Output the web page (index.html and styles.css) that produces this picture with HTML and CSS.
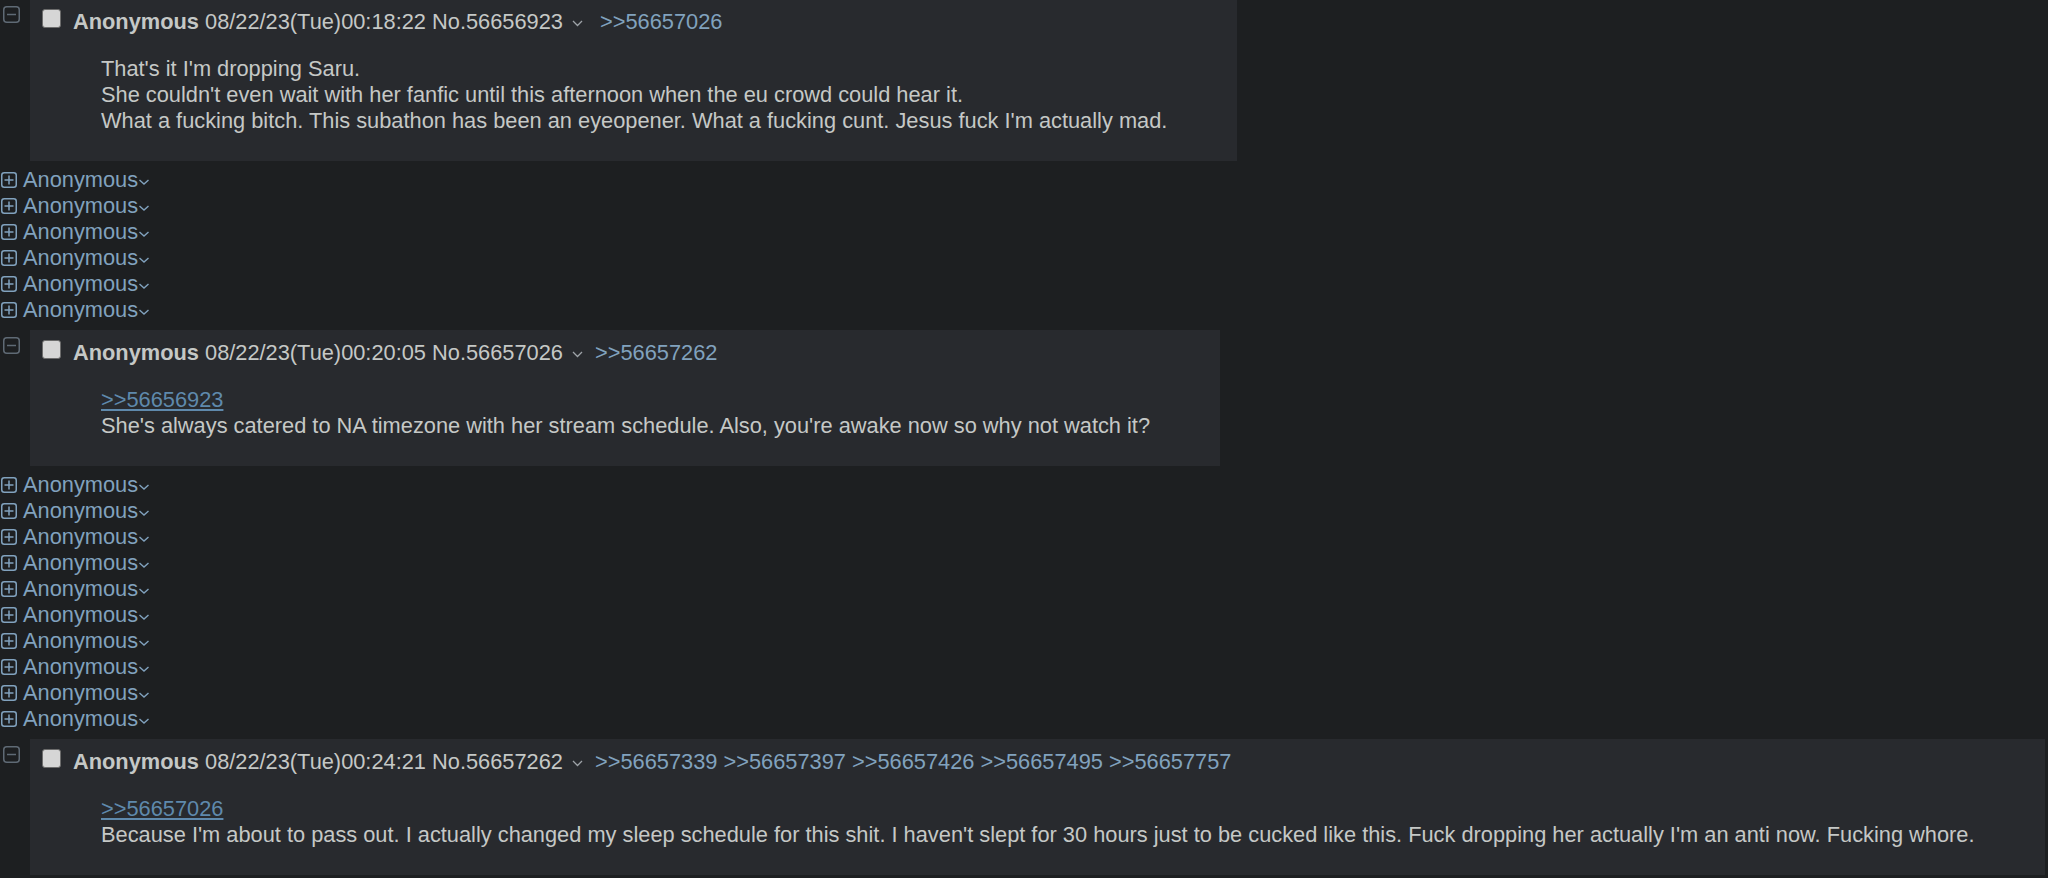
FILE: index.html
```html
<!DOCTYPE html>
<html>
<head>
<meta charset="utf-8">
<link rel="stylesheet" href="styles.css">
</head>
<body>
<div class="thread">

  <div class="postContainer">
    <div class="hideCol"><svg class="minus" width="17" height="17" viewBox="0 0 17 17"><rect x="0.75" y="0.75" width="15.5" height="15.5" rx="3" fill="none" stroke="#5f6a75" stroke-width="1.5"/><path d="M4 8.5h9" stroke="#5f6a75" stroke-width="1.5"/></svg></div>
    <div class="post">
      <div class="postInfo">
        <input type="checkbox" class="cb">
        <span class="name">Anonymous</span>&nbsp;<span class="dateTime">08/22/23(Tue)00:18:22</span>&nbsp;<span class="postNum">No.56656923</span>
        <svg class="menu" width="11" height="7" viewBox="0 0 11 7"><path d="M1 1l4.5 4.5L10 1" fill="none" stroke="#9ea3a8" stroke-width="1.3"/></svg>
        <span class="backlinks"><a class="backlink">&gt;&gt;56657026</a></span>
      </div>
      <blockquote class="postMessage">That's it I'm dropping Saru.<br>She couldn't even wait with her fanfic until this afternoon when the eu crowd could hear it.<br>What a fucking bitch. This subathon has been an eyeopener. What a fucking cunt. Jesus fuck I'm actually mad.</blockquote>
    </div>
  </div>

  <div class="stub"><svg class="plus" width="16" height="16" viewBox="0 0 16 16"><rect x="0.75" y="0.75" width="14.5" height="14.5" rx="2.5" fill="none" stroke="#81a2be" stroke-width="1.5"/><path d="M3.5 8h9M8 3.5v9" stroke="#81a2be" stroke-width="1.5"/></svg><a class="stubName">Anonymous</a><svg class="stubChev" width="12" height="8" viewBox="0 0 12 8"><path d="M1.5 2l4.5 4 4.5-4" fill="none" stroke="#81a2be" stroke-width="1.4"/></svg></div>
  <div class="stub"><svg class="plus" width="16" height="16" viewBox="0 0 16 16"><rect x="0.75" y="0.75" width="14.5" height="14.5" rx="2.5" fill="none" stroke="#81a2be" stroke-width="1.5"/><path d="M3.5 8h9M8 3.5v9" stroke="#81a2be" stroke-width="1.5"/></svg><a class="stubName">Anonymous</a><svg class="stubChev" width="12" height="8" viewBox="0 0 12 8"><path d="M1.5 2l4.5 4 4.5-4" fill="none" stroke="#81a2be" stroke-width="1.4"/></svg></div>
  <div class="stub"><svg class="plus" width="16" height="16" viewBox="0 0 16 16"><rect x="0.75" y="0.75" width="14.5" height="14.5" rx="2.5" fill="none" stroke="#81a2be" stroke-width="1.5"/><path d="M3.5 8h9M8 3.5v9" stroke="#81a2be" stroke-width="1.5"/></svg><a class="stubName">Anonymous</a><svg class="stubChev" width="12" height="8" viewBox="0 0 12 8"><path d="M1.5 2l4.5 4 4.5-4" fill="none" stroke="#81a2be" stroke-width="1.4"/></svg></div>
  <div class="stub"><svg class="plus" width="16" height="16" viewBox="0 0 16 16"><rect x="0.75" y="0.75" width="14.5" height="14.5" rx="2.5" fill="none" stroke="#81a2be" stroke-width="1.5"/><path d="M3.5 8h9M8 3.5v9" stroke="#81a2be" stroke-width="1.5"/></svg><a class="stubName">Anonymous</a><svg class="stubChev" width="12" height="8" viewBox="0 0 12 8"><path d="M1.5 2l4.5 4 4.5-4" fill="none" stroke="#81a2be" stroke-width="1.4"/></svg></div>
  <div class="stub"><svg class="plus" width="16" height="16" viewBox="0 0 16 16"><rect x="0.75" y="0.75" width="14.5" height="14.5" rx="2.5" fill="none" stroke="#81a2be" stroke-width="1.5"/><path d="M3.5 8h9M8 3.5v9" stroke="#81a2be" stroke-width="1.5"/></svg><a class="stubName">Anonymous</a><svg class="stubChev" width="12" height="8" viewBox="0 0 12 8"><path d="M1.5 2l4.5 4 4.5-4" fill="none" stroke="#81a2be" stroke-width="1.4"/></svg></div>
  <div class="stub"><svg class="plus" width="16" height="16" viewBox="0 0 16 16"><rect x="0.75" y="0.75" width="14.5" height="14.5" rx="2.5" fill="none" stroke="#81a2be" stroke-width="1.5"/><path d="M3.5 8h9M8 3.5v9" stroke="#81a2be" stroke-width="1.5"/></svg><a class="stubName">Anonymous</a><svg class="stubChev" width="12" height="8" viewBox="0 0 12 8"><path d="M1.5 2l4.5 4 4.5-4" fill="none" stroke="#81a2be" stroke-width="1.4"/></svg></div>

  <div class="postContainer">
    <div class="hideCol"><svg class="minus" width="17" height="17" viewBox="0 0 17 17"><rect x="0.75" y="0.75" width="15.5" height="15.5" rx="3" fill="none" stroke="#5f6a75" stroke-width="1.5"/><path d="M4 8.5h9" stroke="#5f6a75" stroke-width="1.5"/></svg></div>
    <div class="post">
      <div class="postInfo">
        <input type="checkbox" class="cb">
        <span class="name">Anonymous</span>&nbsp;<span class="dateTime">08/22/23(Tue)00:20:05</span>&nbsp;<span class="postNum">No.56657026</span>
        <svg class="menu" width="11" height="7" viewBox="0 0 11 7"><path d="M1 1l4.5 4.5L10 1" fill="none" stroke="#9ea3a8" stroke-width="1.3"/></svg>
        <span class="backlinks tight"><a class="backlink">&gt;&gt;56657262</a></span>
      </div>
      <blockquote class="postMessage"><a class="quotelink">&gt;&gt;56656923</a><br>She's always catered to NA timezone with her stream schedule. Also, you're awake now so why not watch it?</blockquote>
    </div>
  </div>

  <div class="stub"><svg class="plus" width="16" height="16" viewBox="0 0 16 16"><rect x="0.75" y="0.75" width="14.5" height="14.5" rx="2.5" fill="none" stroke="#81a2be" stroke-width="1.5"/><path d="M3.5 8h9M8 3.5v9" stroke="#81a2be" stroke-width="1.5"/></svg><a class="stubName">Anonymous</a><svg class="stubChev" width="12" height="8" viewBox="0 0 12 8"><path d="M1.5 2l4.5 4 4.5-4" fill="none" stroke="#81a2be" stroke-width="1.4"/></svg></div>
  <div class="stub"><svg class="plus" width="16" height="16" viewBox="0 0 16 16"><rect x="0.75" y="0.75" width="14.5" height="14.5" rx="2.5" fill="none" stroke="#81a2be" stroke-width="1.5"/><path d="M3.5 8h9M8 3.5v9" stroke="#81a2be" stroke-width="1.5"/></svg><a class="stubName">Anonymous</a><svg class="stubChev" width="12" height="8" viewBox="0 0 12 8"><path d="M1.5 2l4.5 4 4.5-4" fill="none" stroke="#81a2be" stroke-width="1.4"/></svg></div>
  <div class="stub"><svg class="plus" width="16" height="16" viewBox="0 0 16 16"><rect x="0.75" y="0.75" width="14.5" height="14.5" rx="2.5" fill="none" stroke="#81a2be" stroke-width="1.5"/><path d="M3.5 8h9M8 3.5v9" stroke="#81a2be" stroke-width="1.5"/></svg><a class="stubName">Anonymous</a><svg class="stubChev" width="12" height="8" viewBox="0 0 12 8"><path d="M1.5 2l4.5 4 4.5-4" fill="none" stroke="#81a2be" stroke-width="1.4"/></svg></div>
  <div class="stub"><svg class="plus" width="16" height="16" viewBox="0 0 16 16"><rect x="0.75" y="0.75" width="14.5" height="14.5" rx="2.5" fill="none" stroke="#81a2be" stroke-width="1.5"/><path d="M3.5 8h9M8 3.5v9" stroke="#81a2be" stroke-width="1.5"/></svg><a class="stubName">Anonymous</a><svg class="stubChev" width="12" height="8" viewBox="0 0 12 8"><path d="M1.5 2l4.5 4 4.5-4" fill="none" stroke="#81a2be" stroke-width="1.4"/></svg></div>
  <div class="stub"><svg class="plus" width="16" height="16" viewBox="0 0 16 16"><rect x="0.75" y="0.75" width="14.5" height="14.5" rx="2.5" fill="none" stroke="#81a2be" stroke-width="1.5"/><path d="M3.5 8h9M8 3.5v9" stroke="#81a2be" stroke-width="1.5"/></svg><a class="stubName">Anonymous</a><svg class="stubChev" width="12" height="8" viewBox="0 0 12 8"><path d="M1.5 2l4.5 4 4.5-4" fill="none" stroke="#81a2be" stroke-width="1.4"/></svg></div>
  <div class="stub"><svg class="plus" width="16" height="16" viewBox="0 0 16 16"><rect x="0.75" y="0.75" width="14.5" height="14.5" rx="2.5" fill="none" stroke="#81a2be" stroke-width="1.5"/><path d="M3.5 8h9M8 3.5v9" stroke="#81a2be" stroke-width="1.5"/></svg><a class="stubName">Anonymous</a><svg class="stubChev" width="12" height="8" viewBox="0 0 12 8"><path d="M1.5 2l4.5 4 4.5-4" fill="none" stroke="#81a2be" stroke-width="1.4"/></svg></div>
  <div class="stub"><svg class="plus" width="16" height="16" viewBox="0 0 16 16"><rect x="0.75" y="0.75" width="14.5" height="14.5" rx="2.5" fill="none" stroke="#81a2be" stroke-width="1.5"/><path d="M3.5 8h9M8 3.5v9" stroke="#81a2be" stroke-width="1.5"/></svg><a class="stubName">Anonymous</a><svg class="stubChev" width="12" height="8" viewBox="0 0 12 8"><path d="M1.5 2l4.5 4 4.5-4" fill="none" stroke="#81a2be" stroke-width="1.4"/></svg></div>
  <div class="stub"><svg class="plus" width="16" height="16" viewBox="0 0 16 16"><rect x="0.75" y="0.75" width="14.5" height="14.5" rx="2.5" fill="none" stroke="#81a2be" stroke-width="1.5"/><path d="M3.5 8h9M8 3.5v9" stroke="#81a2be" stroke-width="1.5"/></svg><a class="stubName">Anonymous</a><svg class="stubChev" width="12" height="8" viewBox="0 0 12 8"><path d="M1.5 2l4.5 4 4.5-4" fill="none" stroke="#81a2be" stroke-width="1.4"/></svg></div>
  <div class="stub"><svg class="plus" width="16" height="16" viewBox="0 0 16 16"><rect x="0.75" y="0.75" width="14.5" height="14.5" rx="2.5" fill="none" stroke="#81a2be" stroke-width="1.5"/><path d="M3.5 8h9M8 3.5v9" stroke="#81a2be" stroke-width="1.5"/></svg><a class="stubName">Anonymous</a><svg class="stubChev" width="12" height="8" viewBox="0 0 12 8"><path d="M1.5 2l4.5 4 4.5-4" fill="none" stroke="#81a2be" stroke-width="1.4"/></svg></div>
  <div class="stub"><svg class="plus" width="16" height="16" viewBox="0 0 16 16"><rect x="0.75" y="0.75" width="14.5" height="14.5" rx="2.5" fill="none" stroke="#81a2be" stroke-width="1.5"/><path d="M3.5 8h9M8 3.5v9" stroke="#81a2be" stroke-width="1.5"/></svg><a class="stubName">Anonymous</a><svg class="stubChev" width="12" height="8" viewBox="0 0 12 8"><path d="M1.5 2l4.5 4 4.5-4" fill="none" stroke="#81a2be" stroke-width="1.4"/></svg></div>

  <div class="postContainer">
    <div class="hideCol"><svg class="minus" width="17" height="17" viewBox="0 0 17 17"><rect x="0.75" y="0.75" width="15.5" height="15.5" rx="3" fill="none" stroke="#5f6a75" stroke-width="1.5"/><path d="M4 8.5h9" stroke="#5f6a75" stroke-width="1.5"/></svg></div>
    <div class="post">
      <div class="postInfo">
        <input type="checkbox" class="cb">
        <span class="name">Anonymous</span>&nbsp;<span class="dateTime">08/22/23(Tue)00:24:21</span>&nbsp;<span class="postNum">No.56657262</span>
        <svg class="menu" width="11" height="7" viewBox="0 0 11 7"><path d="M1 1l4.5 4.5L10 1" fill="none" stroke="#9ea3a8" stroke-width="1.3"/></svg>
        <span class="backlinks tight"><a class="backlink">&gt;&gt;56657339</a> <a class="backlink">&gt;&gt;56657397</a> <a class="backlink">&gt;&gt;56657426</a> <a class="backlink">&gt;&gt;56657495</a> <a class="backlink">&gt;&gt;56657757</a></span>
      </div>
      <blockquote class="postMessage"><a class="quotelink">&gt;&gt;56657026</a><br>Because I'm about to pass out. I actually changed my sleep schedule for this shit. I haven't slept for 30 hours just to be cucked like this. Fuck dropping her actually I'm an anti now. Fucking whore.</blockquote>
    </div>
  </div>

</div>
</body>
</html>
```

FILE: styles.css
```css
html, body {
  margin: 0;
  padding: 0;
}

body {
  background: #1d1f21;
  color: #c5c8c6;
  font-family: "Liberation Sans", Arial, sans-serif;
  font-size: 21.8px;
  line-height: 26px;
  overflow: hidden;
}

.thread {
  margin-top: -8px;
}

.postContainer {
  display: flex;
  align-items: flex-start;
  margin: 7px 0 6px;
}

.hideCol {
  flex: none;
  width: 30px;
}

.minus {
  display: block;
  margin: 7px 0 0 3px;
}

.post {
  flex: none;
  background: #282a2e;
  padding: 10px 5px 5px;
}

.postInfo {
  display: flex;
  align-items: center;
  height: 26px;
  white-space: nowrap;
}

.cb {
  -webkit-appearance: none;
  appearance: none;
  flex: none;
  align-self: flex-start;
  width: 19px;
  height: 19px;
  margin: 0 12px 0 7px;
  background: #d6d6d6;
  border: 1.5px solid #6c6c6c;
  border-radius: 3px;
  box-sizing: border-box;
}

.name {
  font-weight: bold;
  color: #c5c8c6;
}

.menu {
  flex: none;
  margin: 2px 17px 0 9px;
}

.backlinks.tight .backlink:first-child {
  margin-left: -5px;
}

.backlink {
  color: #81a2be;
  text-decoration: none;
}

.postMessage {
  margin: 21px 65px 22px 66px;
  white-space: nowrap;
}

.quotelink {
  color: #5f89ac;
  text-decoration: underline;
}

.stub {
  display: flex;
  align-items: center;
  height: 26px;
  color: #81a2be;
}

.plus {
  flex: none;
  margin: 0 6px 0 1px;
}

.stubName {
  color: #81a2be;
}

.stubChev {
  flex: none;
  margin-top: 3px;
}
```
